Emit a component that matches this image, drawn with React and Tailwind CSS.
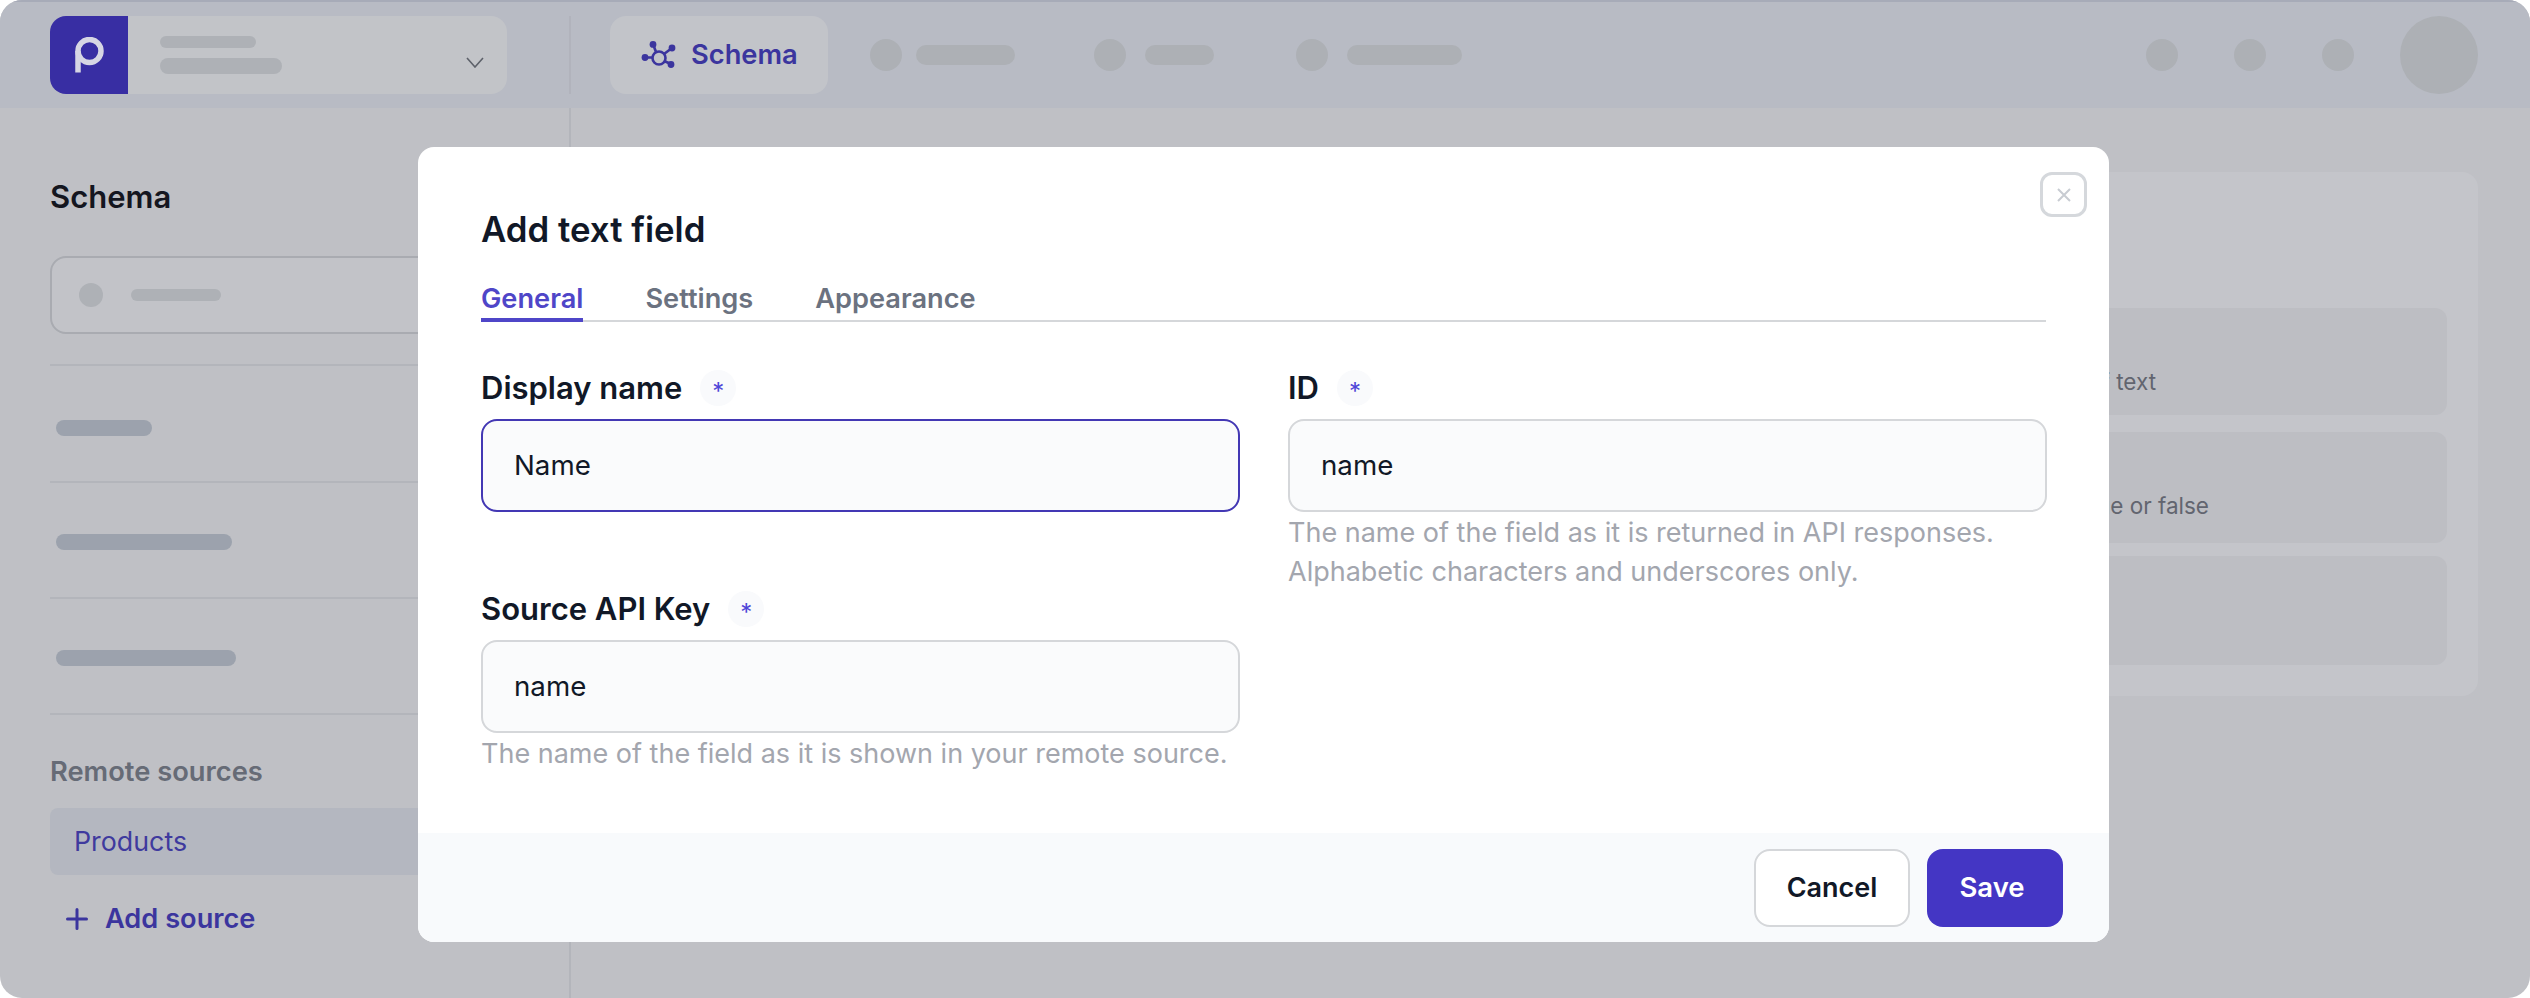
import React from "react";

const F = "font-['Inter',sans-serif]";

function Dot({ className }) {
  return <div className={`shrink-0 rounded-full ${className}`} />;
}

function Badge() {
  return (
    <span className="ml-[18px] flex h-[36px] w-[36px] items-center justify-center rounded-full bg-[#f9fafc] text-[24px] font-normal leading-none text-[#4f46d8]">
      <span className="mt-[7px]">*</span>
    </span>
  );
}

function Label({ text }) {
  return (
    <div className="flex h-[36px] items-center text-[31px] font-semibold text-[#111827]">
      {text}
      <Badge />
    </div>
  );
}

function Input({ value, focused }) {
  return (
    <div
      className={`mt-[13px] flex h-[93px] items-center rounded-[16px] border-2 bg-[#fafbfc] pl-[31px] text-[27.7px] text-[#111827] ${
        focused ? "border-[#4338b4]" : "border-[#d5d7da]"
      }`}
    >
      {value}
    </div>
  );
}

function Help({ children }) {
  return <p className="mt-[1px] text-[27px] leading-[39px] text-[#a3a6ae]">{children}</p>;
}

function Sidebar() {
  return (
    <aside className="flex w-[571px] shrink-0 flex-col border-r-2 border-[#b3b5bb] pl-[50px]">
      <h2 className="mt-[69px] shrink-0 text-[31px] font-semibold leading-[40px] text-[#14161f]">Schema</h2>
      <div className="mt-[39px] flex h-[78px] shrink-0 items-center rounded-[16px] border-2 border-[#a9abb1] bg-[#c2c3c8] pl-[27px]">
        <Dot className="h-[24px] w-[24px] bg-[#aeb1b6]" />
        <div className="ml-[28px] h-[12px] w-[90px] rounded-full bg-[#aeb1b6]" />
      </div>
      <div className="mt-[30px] shrink-0 border-t-2 border-[#b3b5bb] pb-[45px] pl-[6px] pt-[54px]">
        <div className="h-[16px] w-[96px] rounded-full bg-[#9ca2ad]" />
      </div>
      <div className="shrink-0 border-t-2 border-[#b3b5bb] pb-[47px] pl-[6px] pt-[51px]">
        <div className="h-[16px] w-[176px] rounded-full bg-[#9ca2ad]" />
      </div>
      <div className="shrink-0 border-t-2 border-[#b3b5bb] pb-[47px] pl-[6px] pt-[51px]">
        <div className="h-[16px] w-[180px] rounded-full bg-[#9ca2ad]" />
      </div>
      <div className="shrink-0 border-t-2 border-[#b3b5bb] pt-[39px] text-[27.3px] font-semibold leading-[36px] text-[#666b76]">
        Remote sources
      </div>
      <div className="mt-[18px] flex h-[67px] shrink-0 items-center rounded-[8px] bg-[#b4b7c0] pl-[24px] text-[26.8px] text-[#3f3a9e]">
        Products
      </div>
      <div className="mt-[27px] flex shrink-0 items-center pl-[16px] text-[27.2px] font-semibold leading-[34px] text-[#3b359e]">
        <svg width="22" height="22" viewBox="0 0 22 22" fill="none" stroke="currentColor" strokeWidth="3" strokeLinecap="round">
          <path d="M11 1.5v19M1.5 11h19" />
        </svg>
        <span className="ml-[17px]">Add source</span>
      </div>
    </aside>
  );
}

function Card({ className, children }) {
  return (
    <div className={`flex items-start justify-end rounded-[12px] bg-[#bdbec3] pt-[60px] text-[22.5px] leading-[28px] text-[#62656f] ${className}`}>
      {children}
    </div>
  );
}

export default function App() {
  return (
    <div className={`relative h-[998px] w-[2530px] overflow-hidden bg-white ${F}`}>
      <div className="flex h-full flex-col overflow-hidden rounded-[22px] bg-[#bfc0c5]">
        <header className="flex h-[108px] shrink-0 items-center border-t-2 border-[#a7abb8] bg-[#b8bbc4] pl-[50px] pr-[52px]">
          <div className="flex h-[78px] w-[457px] items-center rounded-[16px] bg-[#c2c4c8]">
            <div className="flex h-[78px] w-[78px] items-center justify-center rounded-l-[16px] bg-[#382ea3]">
              <svg width="30" height="36" viewBox="0 0 30 36" fill="none" stroke="#d6d6e4" strokeWidth="5.5">
                <circle cx="15.5" cy="14" r="11.5" />
                <path d="M4 14v21.5" />
              </svg>
            </div>
            <div className="ml-[32px] flex flex-col gap-[10px]">
              <div className="h-[12px] w-[96px] rounded-full bg-[#aeb1b6]" />
              <div className="h-[16px] w-[122px] rounded-full bg-[#aeb1b6]" />
            </div>
            <svg className="ml-[184px] mt-[14px]" width="18" height="11" viewBox="0 0 18 11" fill="none" stroke="#5d616a" strokeWidth="1.6">
              <path d="M1 1l8 9 8-9" />
            </svg>
          </div>
          <div className="ml-[62px] h-[78px] w-[2px] bg-[#b1b3bc]" />
          <div className="ml-[39px] flex h-[78px] w-[218px] items-center rounded-[16px] bg-[#c2c4c9] pl-[31px] text-[27.3px] font-semibold text-[#3b359e]">
            <svg width="36" height="28" viewBox="0 0 36 28" fill="none" stroke="currentColor" strokeWidth="2.6">
              <circle cx="18" cy="17" r="6.5" />
              <path d="M4 16.5h8M12 3l3 8M31 7l-8 6M30 23l-7-3" />
              <g fill="currentColor" stroke="none">
                <circle cx="4" cy="16.5" r="3.4" />
                <circle cx="12" cy="3.4" r="3.4" />
                <circle cx="31" cy="7" r="3.4" />
                <circle cx="30" cy="23.5" r="3.4" />
              </g>
            </svg>
            <span className="ml-[14px]">Schema</span>
          </div>
          <Dot className="ml-[42px] h-[32px] w-[32px] bg-[#adb0b5]" />
          <div className="ml-[14px] h-[20px] w-[99px] rounded-full bg-[#adb0b5]" />
          <Dot className="ml-[79px] h-[32px] w-[32px] bg-[#adb0b5]" />
          <div className="ml-[19px] h-[20px] w-[69px] rounded-full bg-[#adb0b5]" />
          <Dot className="ml-[82px] h-[32px] w-[32px] bg-[#adb0b5]" />
          <div className="ml-[19px] h-[20px] w-[115px] rounded-full bg-[#adb0b5]" />
          <div className="ml-auto flex items-center">
            <Dot className="h-[32px] w-[32px] bg-[#adb0b5]" />
            <Dot className="ml-[56px] h-[32px] w-[32px] bg-[#adb0b5]" />
            <Dot className="ml-[56px] h-[32px] w-[32px] bg-[#adb0b5]" />
            <Dot className="ml-[46px] h-[78px] w-[78px] bg-[#adb0b5]" />
          </div>
        </header>
        <div className="flex min-h-0 flex-1">
          <Sidebar />
          <main className="flex-1 pl-[64px] pr-[52px] pt-[64px]">
            <div className="flex h-[524px] flex-col rounded-[16px] bg-[#c4c5ca] pl-[32px] pr-[31px] pt-[136px]">
              <Card className="h-[107px] pr-[291px]">Single line of text</Card>
              <Card className="mt-[17px] h-[111px] pr-[238px]">True or false</Card>
              <Card className="mt-[13px] h-[109px]" />
            </div>
          </main>
        </div>
      </div>

      <div className="absolute left-[418px] top-[147px] flex h-[795px] w-[1691px] flex-col overflow-hidden rounded-[16px] bg-white">
        <button className="absolute left-[1622px] top-[25px] flex h-[45px] w-[47px] items-center justify-center rounded-[12px] border-[3px] border-[#d5d8dc] bg-white">
          <svg width="14" height="14" viewBox="0 0 14 14" fill="none" stroke="#c8ccd2" strokeWidth="2">
            <path d="M1 1l12 12M13 1L1 13" />
          </svg>
        </button>
        <div className="flex-1 px-[63px] pt-[60px]">
          <h1 className="text-[34.8px] font-semibold leading-[44px] text-[#111827]">Add text field</h1>
          <div className="mt-[29px] flex gap-[62px] border-b-2 border-[#d5d7da] text-[27.2px] font-semibold leading-[38px] text-[#6b7280]">
            <div className="-mb-[2px] border-b-4 border-[#4f46c8] text-[#4f46c8]">General</div>
            <div>Settings</div>
            <div>Appearance</div>
          </div>
          <div className="mt-[48px] grid grid-cols-[759px_759px] gap-x-[48px]">
            <div>
              <Label text="Display name" />
              <Input value="Name" focused />
              <div className="mt-[79px]">
                <Label text="Source API Key" />
                <Input value="name" />
                <Help>The name of the field as it is shown in your remote source.</Help>
              </div>
            </div>
            <div>
              <Label text="ID" />
              <Input value="name" />
              <Help>
                The name of the field as it is returned in API responses.
                <br />
                Alphabetic characters and underscores only.
              </Help>
            </div>
          </div>
        </div>
        <footer className="flex h-[109px] shrink-0 items-start justify-end gap-[17px] bg-[#f8fafc] pr-[46px] pt-[16px]">
          <button className="flex h-[78px] w-[156px] items-center justify-center rounded-[16px] border-2 border-[#d5d7da] bg-white text-[27px] font-semibold text-[#111827]">
            Cancel
          </button>
          <button className="flex h-[78px] w-[136px] items-center justify-center rounded-[16px] bg-[#4436c4] pr-[6px] text-[27.5px] font-semibold text-white">
            Save
          </button>
        </footer>
      </div>
    </div>
  );
}
